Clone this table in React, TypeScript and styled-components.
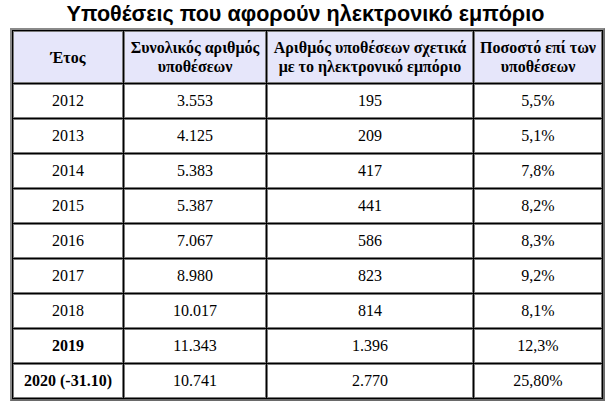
import React from "react";
import styled, { createGlobalStyle } from "styled-components";

const Global = createGlobalStyle`
  html, body { margin: 0; padding: 0; background: #fff; }
  body { width: 609px; height: 401px; overflow: hidden; }
`;

const Page = styled.div`
  display: flex;
  flex-direction: column;
  align-items: center;
  padding-top: 1px;
`;

const Title = styled.h1`
  margin: 0 0 0 2px;
  font-family: "Liberation Sans", Arial, sans-serif;
  font-weight: bold;
  font-size: 21.6px;
  line-height: 25px;
  color: #000;
  height: 27px;
`;

const Table = styled.table`
  align-self: flex-start;
  margin-left: 10px;
  border-collapse: separate;
  border-spacing: 1px;
  background: #000;
  border: 2px solid #8a8a8a;
  border-right-color: #6a6a6a;
  border-bottom-color: #6a6a6a;
  font-family: "Liberation Serif", "Times New Roman", serif;
  color: #000;
  table-layout: fixed;
  width: 595px;
`;

const HeadCell = styled.th<{ $w?: number }>`
  ${(p) => (p.$w ? `width: ${p.$w}px;` : "")}
  height: 50px;
  padding: 0 2px;
  background: #e6e6fa;
  border: 1px solid #7a7a7a;
  font-weight: bold;
  font-size: 16px;
  line-height: 19px;
  text-align: center;
  vertical-align: middle;
`;

const Cell = styled.td<{ $bold?: boolean }>`
  height: 32px;
  padding: 0;
  background: #fff;
  border: 1px solid #7a7a7a;
  font-size: 16px;
  font-weight: ${(p) => (p.$bold ? "bold" : "normal")};
  text-align: center;
  vertical-align: middle;
`;

const rows: { y: string; total: string; ec: string; pct: string; bold?: boolean }[] = [
  { y: "2012", total: "3.553", ec: "195", pct: "5,5%" },
  { y: "2013", total: "4.125", ec: "209", pct: "5,1%" },
  { y: "2014", total: "5.383", ec: "417", pct: "7,8%" },
  { y: "2015", total: "5.387", ec: "441", pct: "8,2%" },
  { y: "2016", total: "7.067", ec: "586", pct: "8,3%" },
  { y: "2017", total: "8.980", ec: "823", pct: "9,2%" },
  { y: "2018", total: "10.017", ec: "814", pct: "8,1%" },
  { y: "2019", total: "11.343", ec: "1.396", pct: "12,3%", bold: true },
  { y: "2020 (-31.10)", total: "10.741", ec: "2.770", pct: "25,80%", bold: true },
];

export default function App() {
  return (
    <>
      <Global />
      <Page>
        <Title>Υποθέσεις που αφορούν ηλεκτρονικό εμπόριο</Title>
        <Table>
          <thead>
            <tr>
              <HeadCell $w={104}>Έτος</HeadCell>
              <HeadCell $w={136}>
                Συνολικός αριθμός
                <br />
                υποθέσεων
              </HeadCell>
              <HeadCell $w={200}>
                Αριθμός υποθέσεων σχετικά
                <br />
                με το ηλεκτρονικό εμπόριο
              </HeadCell>
              <HeadCell>
                Ποσοστό επί των
                <br />
                υποθέσεων
              </HeadCell>
            </tr>
          </thead>
          <tbody>
            {rows.map((r) => (
              <tr key={r.y}>
                <Cell $bold={r.bold}>{r.y}</Cell>
                <Cell>{r.total}</Cell>
                <Cell>{r.ec}</Cell>
                <Cell>{r.pct}</Cell>
              </tr>
            ))}
          </tbody>
        </Table>
      </Page>
    </>
  );
}
